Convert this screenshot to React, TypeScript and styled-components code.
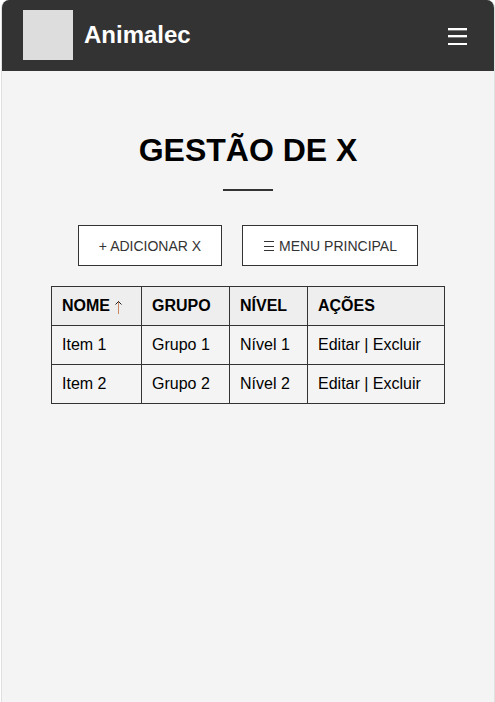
import React from "react";
import styled, { createGlobalStyle } from "styled-components";

const GlobalStyle = createGlobalStyle`
  * { box-sizing: border-box; }
  html, body, #root { height: 100%; }
  body {
    margin: 0;
    overflow: hidden;
    background: #fff;
    color: #000;
    font-family: "Liberation Sans", Arial, sans-serif;
    font-size: 16px;
  }
`;

const Frame = styled.div`
  height: 100%;
  margin-left: 1px;
  border: solid #e0e0e0;
  border-width: 0 1px;
  border-radius: 8px 8px 0 0;
  background: #f4f4f4;
  overflow: hidden;
`;

const Header = styled.header`
  display: flex;
  align-items: center;
  height: 71px;
  padding: 0 27px 1px 21px;
  background: #333;
  color: #fff;
`;

const Logo = styled.div`
  width: 50px;
  height: 50px;
  margin-right: 11px;
  background: #ddd;
`;

const Brand = styled.span`
  font-size: 24px;
  line-height: 28px;
  font-weight: bold;
`;

const IconButton = styled.button`
  display: flex;
  margin: 3px 0 0 auto;
  padding: 0;
  border: 0;
  background: none;
  color: inherit;
`;

const Main = styled.main`
  display: flex;
  flex-direction: column;
  align-items: center;
  padding-top: 60px;
`;

const Title = styled.h1`
  display: flex;
  flex-direction: column;
  align-items: center;
  gap: 20px;
  margin: 0;
  font-size: 32px;
  line-height: 38px;
  text-transform: uppercase;

  &::after {
    content: "";
    width: 50px;
    height: 2px;
    background: #333;
  }
`;

const Actions = styled.div`
  display: flex;
  gap: 20px;
  margin: 34px 0 20px;
`;

const ActionButton = styled.button<{ $width: number }>`
  display: flex;
  align-items: center;
  justify-content: center;
  gap: 4px;
  width: ${({ $width }) => $width}px;
  height: 41px;
  padding: 1px 0 0;
  border: 1px solid #333;
  background: #fff;
  color: #333;
  font: 14px "Liberation Sans", Arial, sans-serif;
  text-transform: uppercase;
  white-space: nowrap;
`;

const Table = styled.table`
  width: 394px;
  table-layout: fixed;
  border-collapse: collapse;
`;

const Column = styled.col<{ $width: number }>`
  width: ${({ $width }) => $width}px;
`;

const Cell = styled.td`
  height: 39px;
  padding: 0 10px 1px;
  border: 1px solid #333;
  line-height: 18px;
  text-align: left;
  white-space: nowrap;
`;

const HeadCell = styled(Cell).attrs({ as: "th" })`
  background: #eee;
  text-transform: uppercase;
`;

const SortArrow = styled.svg`
  margin-left: 4px;
  vertical-align: -3px;
`;

const rows = [
  ["Item 1", "Grupo 1", "Nível 1"],
  ["Item 2", "Grupo 2", "Nível 2"],
];

export default function App() {
  return (
    <>
      <GlobalStyle />
      <Frame>
        <Header>
          <Logo />
          <Brand>Animalec</Brand>
          <IconButton aria-label="Menu">
            <svg width="19" height="17" fill="currentColor" shapeRendering="crispEdges">
              <path d="M0 0h19v2H0zM0 7h19v2H0zM0 15h19v2H0z" />
              <path d="M0 2h19v1H0zM0 9h19v1H0z" opacity=".35" />
            </svg>
          </IconButton>
        </Header>
        <Main>
          <Title>Gestão de X</Title>
          <Actions>
            <ActionButton $width={144}>+ Adicionar X</ActionButton>
            <ActionButton $width={176}>
              <svg width="12" height="10" fill="currentColor" shapeRendering="crispEdges">
                <path d="M1 0h10v1H1zM1 5h10v1H1zM1 9h10v1H1z" />
              </svg>
              <span>Menu principal</span>
            </ActionButton>
          </Actions>
          <Table>
            <colgroup>
              <Column $width={90} />
              <Column $width={88} />
              <Column $width={78} />
              <Column $width={137} />
            </colgroup>
            <thead>
              <tr>
                <HeadCell>
                  Nome
                  <SortArrow width="9" height="14" fill="none">
                    <path d="M4.5 1v13" stroke="#c98a62" />
                    <path d="M1.5 4.5l3-3 3 3" stroke="#222" />
                  </SortArrow>
                </HeadCell>
                <HeadCell>Grupo</HeadCell>
                <HeadCell>Nível</HeadCell>
                <HeadCell>Ações</HeadCell>
              </tr>
            </thead>
            <tbody>
              {rows.map((row) => (
                <tr key={row[0]}>
                  {row.map((value) => (
                    <Cell key={value}>{value}</Cell>
                  ))}
                  <Cell>Editar | Excluir</Cell>
                </tr>
              ))}
            </tbody>
          </Table>
        </Main>
      </Frame>
    </>
  );
}
